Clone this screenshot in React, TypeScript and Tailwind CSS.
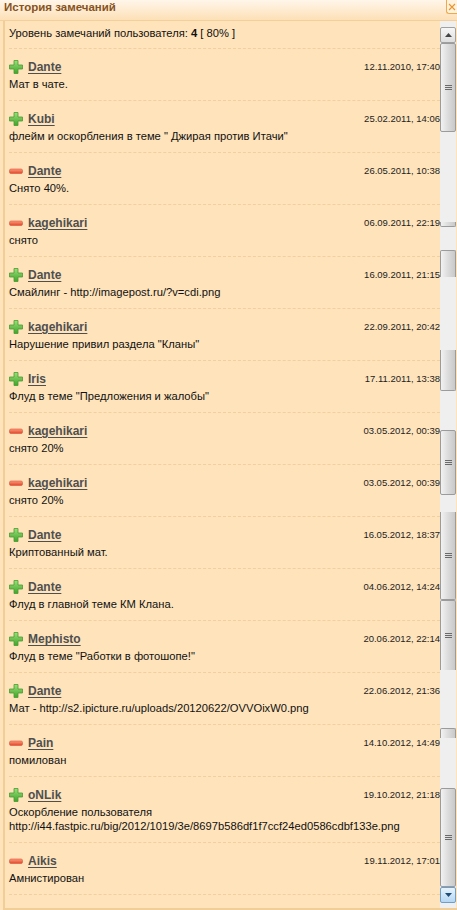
import * as React from "react"

interface Remark {
  user: string
  plus: boolean
  date: string
  text: string[]
}

const remarks: Remark[] = [
  { user: "Dante", plus: true, date: "12.11.2010, 17:40", text: ["Мат в чате."] },
  { user: "Kubi", plus: true, date: "25.02.2011, 14:06", text: ["флейм и оскорбления в теме \" Джирая против Итачи\""] },
  { user: "Dante", plus: false, date: "26.05.2011, 10:38", text: ["Снято 40%."] },
  { user: "kagehikari", plus: false, date: "06.09.2011, 22:19", text: ["снято"] },
  { user: "Dante", plus: true, date: "16.09.2011, 21:15", text: ["Смайлинг - http://imagepost.ru/?v=cdi.png"] },
  { user: "kagehikari", plus: true, date: "22.09.2011, 20:42", text: ["Нарушение привил раздела \"Кланы\""] },
  { user: "Iris", plus: true, date: "17.11.2011, 13:38", text: ["Флуд в теме \"Предложения и жалобы\""] },
  { user: "kagehikari", plus: false, date: "03.05.2012, 00:39", text: ["снято 20%"] },
  { user: "kagehikari", plus: false, date: "03.05.2012, 00:39", text: ["снято 20%"] },
  { user: "Dante", plus: true, date: "16.05.2012, 18:37", text: ["Криптованный мат."] },
  { user: "Dante", plus: true, date: "04.06.2012, 14:24", text: ["Флуд в главной теме КМ Клана."] },
  { user: "Mephisto", plus: true, date: "20.06.2012, 22:14", text: ["Флуд в теме \"Работки в фотошопе!\""] },
  { user: "Dante", plus: true, date: "22.06.2012, 21:36", text: ["Мат - http://s2.ipicture.ru/uploads/20120622/OVVOixW0.png"] },
  { user: "Pain", plus: false, date: "14.10.2012, 14:49", text: ["помилован"] },
  {
    user: "oNLik",
    plus: true,
    date: "19.10.2012, 21:18",
    text: ["Оскорбление пользователя", "http://i44.fastpic.ru/big/2012/1019/3e/8697b586df1f7ccf24ed0586cdbf133e.png"],
  },
  { user: "Aikis", plus: false, date: "19.11.2012, 17:01", text: ["Амнистирован"] },
]

// stitched scrollbar pieces, top to bottom
type Seg = { kind: "up" | "down" | "track" | "thumb" | "top" | "bottom"; h: number; grip?: boolean }
const segs: Seg[] = [
  { kind: "up", h: 16 },
  { kind: "thumb", h: 89, grip: true },
  { kind: "track", h: 90 },
  { kind: "bottom", h: 5 },
  { kind: "track", h: 23 },
  { kind: "top", h: 27 },
  { kind: "track", h: 73 },
  { kind: "bottom", h: 41 },
  { kind: "track", h: 39 },
  { kind: "thumb", h: 65, grip: true },
  { kind: "track", h: 17 },
  { kind: "bottom", h: 88, grip: true },
  { kind: "top", h: 70, grip: true },
  { kind: "track", h: 58 },
  { kind: "top", h: 10 },
  { kind: "track", h: 50 },
  { kind: "thumb", h: 99, grip: true },
  { kind: "down", h: 16 },
]

function PlusIcon() {
  return (
    <svg width="14" height="14" viewBox="0 0 14 14" className="shrink-0">
      <defs>
        <linearGradient id="pg" x1="0" y1="0" x2="0" y2="1">
          <stop offset="0" stopColor="#9be07a" />
          <stop offset="1" stopColor="#3fa52a" />
        </linearGradient>
      </defs>
      <path d="M5 0.5h4v4.5h4.5v4H9v4.5H5V9H0.5V5H5z" fill="url(#pg)" stroke="#4c9a34" strokeWidth="0.8" />
    </svg>
  )
}

function MinusIcon() {
  return (
    <svg width="14" height="14" viewBox="0 0 14 14" className="shrink-0">
      <defs>
        <linearGradient id="mg" x1="0" y1="0" x2="0" y2="1">
          <stop offset="0" stopColor="#ff9a7a" />
          <stop offset="1" stopColor="#e0452a" />
        </linearGradient>
      </defs>
      <rect x="0.5" y="5" width="13" height="4.5" rx="1.5" fill="url(#mg)" stroke="#d8553a" strokeWidth="0.6" />
    </svg>
  )
}

function ScrollSeg({ seg }: { seg: Seg }) {
  if (seg.kind === "track") return <div style={{ height: seg.h }} />
  if (seg.kind === "up" || seg.kind === "down") {
    const down = seg.kind === "down"
    return (
      <div
        style={{ height: seg.h }}
        className={`flex items-center justify-center rounded-[2px] border ${
          down ? "border-[#6f9ec8] bg-gradient-to-b from-[#e6f3fc] to-[#b5d7f2]" : "border-[#a0a0a0] bg-gradient-to-b from-[#f6f6f6] to-[#dedede]"
        }`}
      >
        <svg width="7" height="4" viewBox="0 0 7 4">
          <path d={down ? "M0 0h7L3.5 4z" : "M0 4h7L3.5 0z"} fill={down ? "#1e4d7a" : "#444"} />
        </svg>
      </div>
    )
  }
  const edge =
    seg.kind === "thumb"
      ? "rounded-[2px] border"
      : seg.kind === "top"
        ? "rounded-t-[2px] border border-b-0"
        : "rounded-b-[2px] border border-t-0"
  return (
    <div
      style={{ height: seg.h }}
      className={`flex items-center justify-center border-[#9b9b9b] bg-gradient-to-r from-[#f2f2f2] via-[#dcdcdc] to-[#c9c9c9] ${edge}`}
    >
      {seg.grip && (
        <div className="flex flex-col gap-[1px]">
          <div className="h-[1px] w-[7px] bg-[#6a6a6a]" />
          <div className="h-[1px] w-[7px] bg-[#6a6a6a]" />
          <div className="h-[1px] w-[7px] bg-[#6a6a6a]" />
        </div>
      )}
    </div>
  )
}

function Entry({ r }: { r: Remark }) {
  return (
    <div className="border-b border-dashed border-[#f1cf9f] pt-[10px] pb-[9px]">
      <div className="flex h-[16px] items-center">
        <div className="flex w-[19px] items-center">{r.plus ? <PlusIcon /> : <MinusIcon />}</div>
        <span className="text-[12px] font-bold text-[#4f4f4f] underline underline-offset-[2px]">{r.user}</span>
        <span className="ml-auto text-[9.5px] text-[#1d1d1d]">{r.date}</span>
      </div>
      <div className="mt-[2px] text-[11.2px] leading-[14px] text-[#111]">
        {r.text.map((line, i) => (
          <div key={i}>{line}</div>
        ))}
      </div>
    </div>
  )
}

export default function App() {
  return (
    <div
      className="flex h-[910px] w-[457px] flex-col overflow-hidden bg-[#fee3bb]"
      style={{ fontFamily: '"Liberation Sans", Arial, sans-serif' }}
    >
      {/* title bar */}
      <div className="flex h-[21px] shrink-0 items-start border-b border-[#f2cf9b] bg-gradient-to-b from-[#fff6ea] to-[#fde0b6] pl-[4px]">
        <span className="text-[11.5px] leading-[14px] font-bold text-[#87531f]">История замечаний</span>
        <div className="ml-auto flex h-[14px] w-[11px] items-center justify-center rounded-bl-[3px] border-b border-l border-[#f0a94a] bg-[#fff3e0]">
          <svg width="8" height="8" viewBox="0 0 8 8">
            <path d="M1 1l6 6M7 1l-6 6" stroke="#e9952e" strokeWidth="1.2" />
          </svg>
        </div>
      </div>

      <div className="ml-[3px] flex min-h-0 flex-1 border-b-2 border-l-2 border-[#f1cd98]">
        <div className="min-w-0 flex-1 pl-[4px]">
          <div className="h-[28px] border-b border-dashed border-[#f1cf9f] pt-[5px] text-[11.2px] leading-[14px] text-[#111]">
            Уровень замечаний пользователя: <b>4</b> [ 80% ]
          </div>
          {remarks.map((r, i) => (
            <Entry key={i} r={r} />
          ))}
        </div>
        <div className="flex w-[16px] shrink-0 flex-col bg-[#efefef] pt-[6px]">
          {segs.map((s, i) => (
            <ScrollSeg key={i} seg={s} />
          ))}
        </div>
        <div className="w-[1px] shrink-0" />
      </div>
    </div>
  )
}
